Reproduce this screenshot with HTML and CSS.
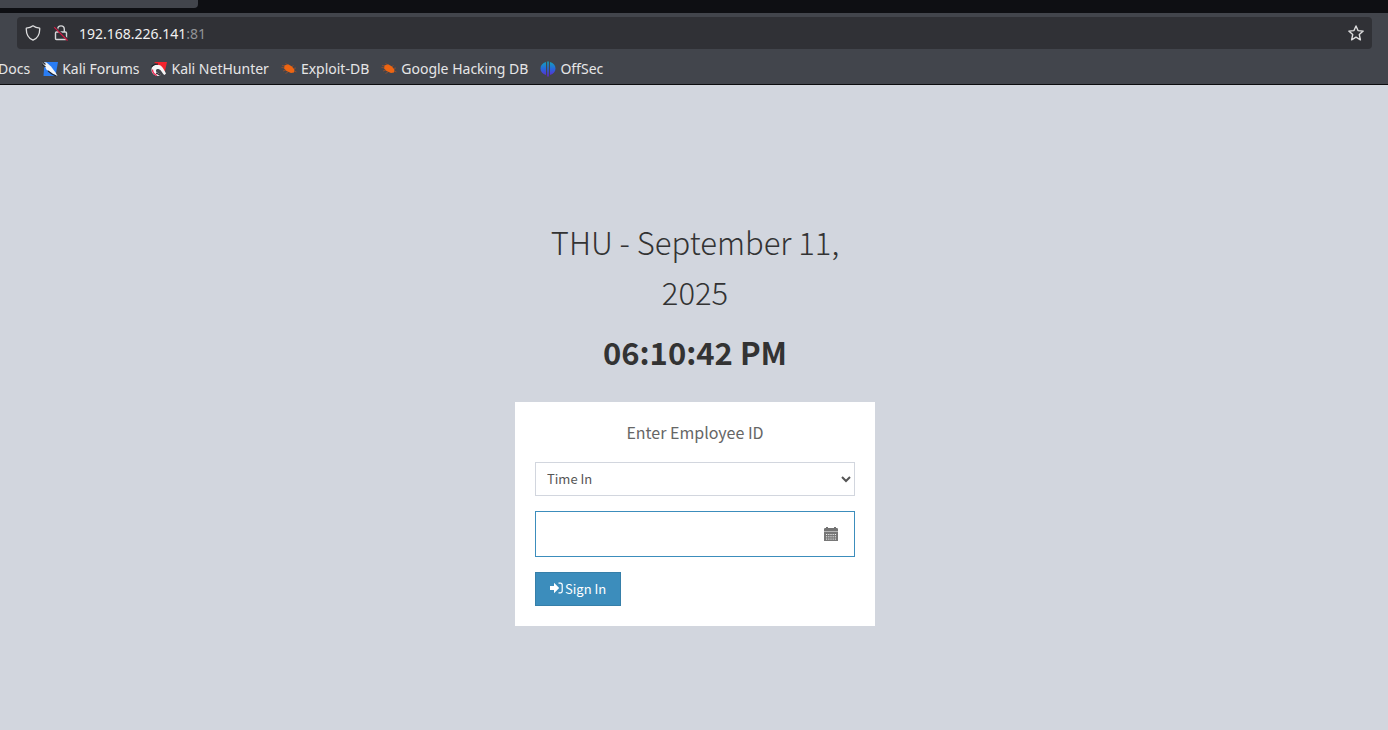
FILE: index.html
```html
<!DOCTYPE html>
<html lang="en">
<head>
<meta charset="utf-8">
<meta name="viewport" content="width=device-width, initial-scale=1">
<title>Attendance</title>
<link rel="stylesheet" href="styles.css">
</head>
<body>
<header class="browser">
  <div class="tabs"><div class="tab"></div></div>
  <div class="toolbar">
    <div class="urlbar">
      <svg class="icon" viewBox="0 0 16 16" fill="none" stroke="#dededf" stroke-width="1.3" stroke-linejoin="round" aria-hidden="true"><path d="M8 .8C6 2.4 3.8 3 1.3 3.2 1 9.5 3.5 13.2 8 15.2c4.500-2 7-5.700 6.700-12C12.200 3 10 2.400 8 .8z"/></svg>
      <svg class="icon" viewBox="0 0 16 16" fill="none" aria-hidden="true"><path d="M4.700 7V4.200a3.300 3.300 0 0 1 6.600 0V7M3.500 7h9q1 0 1 1v5.500q0 1-1 1h-9q-1 0-1-1V8q0-1 1-1z" stroke="#d6d6d8" stroke-width="1.400" stroke-linejoin="round"/><path d="M2 2.500l12.500 12" stroke="#303136" stroke-width="2"/><path d="M1.200 2.200l13.300 13.300" stroke="#d71a45" stroke-width="1.200"/></svg>
      <span class="address">192.168.226.141<span class="port">:81</span></span>
      <svg class="icon star" viewBox="0 0 16 16" fill="none" stroke="#dededf" stroke-width="1.400" stroke-linejoin="round" aria-hidden="true"><path d="M8 .9l2 4.700 5.200.5-3.900 3.500 1.100 5.200L8 12.100l-4.400 2.700 1.100-5.200L.8 6.100 6 5.600z"/></svg>
    </div>
    <nav class="bookmarks">
      <a href="#">Docs</a>
      <a href="#"><svg class="icon" viewBox="0 0 16 16" aria-hidden="true"><path d="M2.500 1H16l-2.500 14H1.500z" fill="#2a7df4"/><path d="M0 1l4.500.5L9 5.500l4.500 6L15.500 15l-5-2.500-6-4z" fill="#f3f5f8"/><path d="M.5 1l3 2.500M0 3.500l3.500 2.500M6 10l4 3 4 2" fill="none" stroke="#25272b" stroke-width="1.200"/></svg>Kali Forums</a>
      <a href="#"><svg class="icon" viewBox="0 0 16 16" aria-hidden="true"><path d="M3 1h13l-2.500 11L7 4z" fill="#f5242d"/><path d="M.5 9C.5 5.500 3 3.800 6.500 3.800c4 0 5.500 3.200 8.500 8.700l-1.500 1.500C11.500 13 10.500 9 8 8.200 5 7.500 4 10 6 11.500l4 2.500-3 1C3 14.500.5 12 .5 9z" fill="#f4f4f5"/><path d="M.5 5.500C2.500 3.500 4.500 2.800 7 3.200M5 12l4.500 2.300" fill="none" stroke="#23242a" stroke-width="1.200"/><path d="M1.500 8.500c0 3 2 5 4.500 6" fill="none" stroke="#ed2552" stroke-width="1.300"/></svg>Kali NetHunter</a>
      <a href="#"><svg class="icon" viewBox="0 0 16 16" aria-hidden="true"><path d="M3.500 4.500l3.500-1.200 4 2.200 2.500 3.300-.5 2.700-3 .6-4.500-2.100L3 7.500z" fill="#ee6512"/><path d="M4 5L1 4.500M4 7L.5 6.500M5 9l-3 1M7 11l-2.500 1.500M7 4L4.500 2.500M11 5.500l1.500-1M12 7.500l3-.5M13 10l2.500 1" stroke="#b85420" stroke-width=".6"/></svg>Exploit-DB</a>
      <a href="#"><svg class="icon" viewBox="0 0 16 16" aria-hidden="true"><path d="M3.500 4.500l3.500-1.200 4 2.200 2.500 3.300-.5 2.700-3 .6-4.500-2.100L3 7.500z" fill="#ee6512"/><path d="M4 5L1 4.500M4 7L.5 6.500M5 9l-3 1M7 11l-2.500 1.500M7 4L4.500 2.500M11 5.500l1.500-1M12 7.500l3-.5M13 10l2.500 1" stroke="#b85420" stroke-width=".6"/></svg>Google Hacking DB</a>
      <a href="#"><svg class="icon" viewBox="0 0 16 16" aria-hidden="true"><defs><linearGradient id="offsec" x1="0" y1="0" x2="0" y2="1"><stop offset="0" stop-color="#12a4b8"/><stop offset=".5" stop-color="#2866dc"/><stop offset="1" stop-color="#6424cf"/></linearGradient></defs><path d="M6 1v13C2.500 13 .5 10.500.5 7.500S2.500 2 6 1zM7.200.5h1.600v15H7.200zM10 1v13c3.500-1 5.500-3.500 5.500-6.500S13.500 2 10 1z" fill="url(#offsec)"/></svg>OffSec</a>
    </nav>
  </div>
</header>
<main class="page">
  <div class="login">
    <div class="clock">
      <p class="date">THU - September 11, 2025</p>
      <p class="time">06:10:42 PM</p>
    </div>
    <form class="card">
      <h1 class="title" id="title">Enter Employee ID</h1>
      <select class="control status" name="status" aria-label="Status">
        <option>Time In</option>
        <option>Time Out</option>
      </select>
      <div class="field">
        <input class="control employee" type="text" name="employee" aria-labelledby="title">
        <svg class="calendar" viewBox="0 0 14 14" aria-hidden="true"><path d="M0 2.200Q0 1 1.200 1H2V0h2v1h6V0h2v1h.8Q14 1 14 2.200V4H0z" fill="#737373"/><path d="M0 4h14v1.200H0z" fill="#b5b5b5"/><path d="M0 5h14v9H0z" fill="#777"/><path d="M2 7.500h10M2 9.800h10M2 12.100h10" stroke="#eee" stroke-width="1" stroke-dasharray="1.200 1"/></svg>
      </div>
      <button class="signin" type="submit"><svg class="enter" viewBox="0 0 13 12" aria-hidden="true"><path d="M0 4h4V.8L9.200 6 4 11.200V8H0z" fill="#fff"/><path d="M8.500 1.200h2A1.700 1.700 0 0 1 12.200 3v6a1.700 1.700 0 0 1-1.700 1.800h-2" fill="none" stroke="#fff" stroke-width="1.200"/></svg>Sign In</button>
    </form>
  </div>
</main>
</body>
</html>
```
FILE: styles.css
```css
* {
  box-sizing: border-box;
}

body {
  display: flex;
  flex-direction: column;
  min-height: 100vh;
  margin: 0;
  background: #d2d6de;
  color: #333;
  font-family: "Noto Sans CJK JP", "Noto Sans", sans-serif;
}

.browser {
  border-bottom: 1px solid #0c0c0e;
  background: #42454c;
  color: #e6e6e7;
  font-family: "Noto Sans", sans-serif;
  font-size: 14px;
}

.tabs {
  height: 13px;
  background: #0e0f13;
}

.tab {
  width: 198px;
  height: 8px;
  border-radius: 0 0 4px 0;
  background: #42454c;
}

.toolbar {
  padding: 4px 16px 0 17px;
}

.urlbar {
  display: flex;
  align-items: center;
  gap: 12px;
  height: 32px;
  padding: 0 8px;
  border-radius: 4px;
  background: #303136;
}

.icon {
  flex: none;
  width: 16px;
  height: 16px;
}

.address {
  margin-left: -2px;
  color: #f0f0f1;
}

.port {
  color: #929397;
}

.star {
  margin-left: auto;
}

.bookmarks {
  display: flex;
  gap: 12px;
  height: 35px;
  margin-left: -19px;
  padding-top: 4px;
}

.bookmarks a {
  display: flex;
  align-items: center;
  gap: 4px;
  height: 31px;
  color: inherit;
  text-decoration: none;
  white-space: nowrap;
}

.page {
  flex: 1;
  padding: 132px 0 0 2px;
}

.login {
  width: 360px;
  max-width: 100%;
  margin: 0 auto;
}

.clock {
  padding: 0 20px 25px;
  font-size: 31px;
  line-height: 50px;
  text-align: center;
}

.date {
  margin: 0 0 10px;
  font-weight: 300;
}

.time {
  margin: 0;
  font-weight: 700;
}

.card {
  padding: 20px;
  background: #fff;
  color: #666;
  font-size: 13px;
}

.title {
  margin: 0 0 20px;
  font-size: 16px;
  font-weight: 400;
  line-height: 20px;
  text-align: center;
}

.control {
  display: block;
  width: 100%;
  border: 1px solid #d2d6de;
  border-radius: 0;
  outline: none;
  background: #fff;
  color: #555;
  font: inherit;
}

.status {
  height: 34px;
  margin-bottom: 15px;
  padding: 0 1px 2px 7px;
}

.field {
  position: relative;
  margin-bottom: 15px;
}

.employee {
  height: 46px;
  padding: 10px 42px 10px 16px;
  border-color: #3c8dbc;
}

.calendar {
  position: absolute;
  top: 16px;
  right: 17px;
  width: 14px;
  height: 14px;
}

.signin {
  display: flex;
  align-items: center;
  justify-content: center;
  gap: 2px;
  height: 34px;
  padding: 0 14px 2px;
  border: 1px solid #367fa9;
  background: #3c8dbc;
  color: #fff;
  font: inherit;
}

.enter {
  width: 13px;
  height: 12px;
}
```
